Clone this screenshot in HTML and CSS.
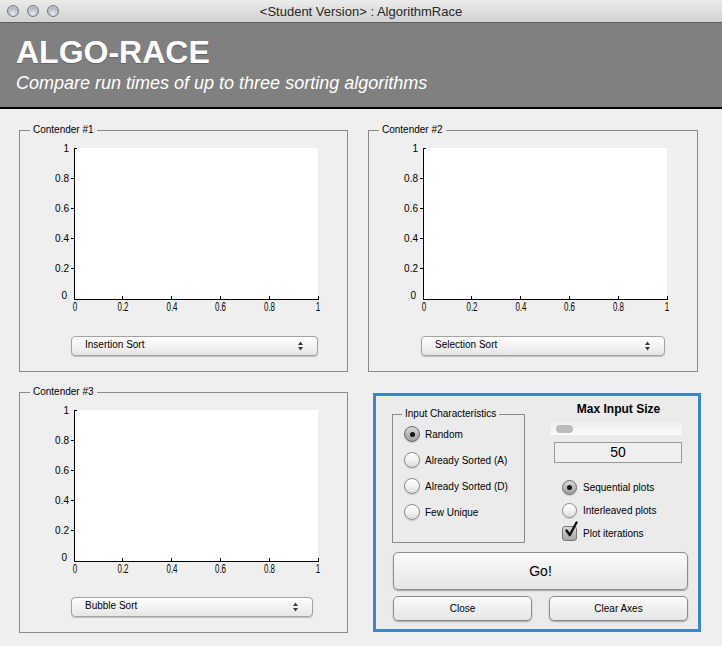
FILE: index.html
```html
<!DOCTYPE html>
<html lang="en">
<head>
<meta charset="utf-8">
<title>AlgorithmRace</title>
<link rel="stylesheet" href="styles.css">
</head>
<body>
<div class="window">
  <div class="titlebar">
    <div class="lights"><span class="light"></span><span class="light"></span><span class="light"></span></div>
    <div class="wintitle">&lt;Student Version&gt; : AlgorithmRace</div>
    <div></div>
  </div>
  <header class="banner">
    <h1>ALGO-RACE</h1>
    <p>Compare run times of up to three sorting algorithms</p>
  </header>
  <main class="grid">
    <section class="panel">
      <div class="panel-title">Contender #1</div>
      <svg class="axes" width="290" height="178" viewBox="0 0 290 178" aria-hidden="true">
        <rect x="31" y="12" width="243" height="151" fill="#fff"/>
        <g stroke="#000" fill="none" shape-rendering="crispEdges">
          <path d="M30.5 12V163.5H274.5"/>
          <path d="M30 12.5H33M27 42.5H30M27 72.5H30M27 102.5H30M27 132.5H30M78.5 163V160M127.5 163V160M176.5 163V160M225.5 163V160M274.5 163V160"/>
        </g>
        <g class="yt">
          <text x="25" y="16">1</text><text x="25" y="46">0.8</text><text x="25" y="76">0.6</text><text x="25" y="106">0.4</text><text x="25" y="136">0.2</text><text x="23" y="163">0</text>
        </g>
        <g class="xt">
          <text x="31" y="174.5" textLength="4.5" lengthAdjust="spacingAndGlyphs">0</text><text x="79" y="174.5" textLength="11" lengthAdjust="spacingAndGlyphs">0.2</text><text x="128" y="174.5" textLength="11" lengthAdjust="spacingAndGlyphs">0.4</text><text x="176.5" y="174.5" textLength="11" lengthAdjust="spacingAndGlyphs">0.6</text><text x="225.5" y="174.5" textLength="11" lengthAdjust="spacingAndGlyphs">0.8</text><text x="274" y="174.5" textLength="4.5" lengthAdjust="spacingAndGlyphs">1</text>
        </g>
      </svg>
      <div class="popup"><span>Insertion Sort</span><svg class="updown" width="5" height="10" viewBox="0 0 5 10"><path d="M2.5 0.5L5 4H0Z M2.5 9.5L5 6H0Z" fill="#3a3a3a"/></svg></div>
    </section>

    <section class="panel">
      <div class="panel-title">Contender #2</div>
      <svg class="axes" width="290" height="178" viewBox="0 0 290 178" aria-hidden="true">
        <rect x="31" y="12" width="243" height="151" fill="#fff"/>
        <g stroke="#000" fill="none" shape-rendering="crispEdges">
          <path d="M30.5 12V163.5H274.5"/>
          <path d="M30 12.5H33M27 42.5H30M27 72.5H30M27 102.5H30M27 132.5H30M78.5 163V160M127.5 163V160M176.5 163V160M225.5 163V160M274.5 163V160"/>
        </g>
        <g class="yt">
          <text x="25" y="16">1</text><text x="25" y="46">0.8</text><text x="25" y="76">0.6</text><text x="25" y="106">0.4</text><text x="25" y="136">0.2</text><text x="23" y="163">0</text>
        </g>
        <g class="xt">
          <text x="31" y="174.5" textLength="4.5" lengthAdjust="spacingAndGlyphs">0</text><text x="79" y="174.5" textLength="11" lengthAdjust="spacingAndGlyphs">0.2</text><text x="128" y="174.5" textLength="11" lengthAdjust="spacingAndGlyphs">0.4</text><text x="176.5" y="174.5" textLength="11" lengthAdjust="spacingAndGlyphs">0.6</text><text x="225.5" y="174.5" textLength="11" lengthAdjust="spacingAndGlyphs">0.8</text><text x="274" y="174.5" textLength="4.5" lengthAdjust="spacingAndGlyphs">1</text>
        </g>
      </svg>
      <div class="popup popup-right"><span>Selection Sort</span><svg class="updown" width="5" height="10" viewBox="0 0 5 10"><path d="M2.5 0.5L5 4H0Z M2.5 9.5L5 6H0Z" fill="#3a3a3a"/></svg></div>
    </section>

    <section class="panel">
      <div class="panel-title">Contender #3</div>
      <svg class="axes" width="290" height="178" viewBox="0 0 290 178" aria-hidden="true">
        <rect x="31" y="12" width="243" height="151" fill="#fff"/>
        <g stroke="#000" fill="none" shape-rendering="crispEdges">
          <path d="M30.5 12V163.5H274.5"/>
          <path d="M30 12.5H33M27 42.5H30M27 72.5H30M27 102.5H30M27 132.5H30M78.5 163V160M127.5 163V160M176.5 163V160M225.5 163V160M274.5 163V160"/>
        </g>
        <g class="yt">
          <text x="25" y="16">1</text><text x="25" y="46">0.8</text><text x="25" y="76">0.6</text><text x="25" y="106">0.4</text><text x="25" y="136">0.2</text><text x="23" y="163">0</text>
        </g>
        <g class="xt">
          <text x="31" y="174.5" textLength="4.5" lengthAdjust="spacingAndGlyphs">0</text><text x="79" y="174.5" textLength="11" lengthAdjust="spacingAndGlyphs">0.2</text><text x="128" y="174.5" textLength="11" lengthAdjust="spacingAndGlyphs">0.4</text><text x="176.5" y="174.5" textLength="11" lengthAdjust="spacingAndGlyphs">0.6</text><text x="225.5" y="174.5" textLength="11" lengthAdjust="spacingAndGlyphs">0.8</text><text x="274" y="174.5" textLength="4.5" lengthAdjust="spacingAndGlyphs">1</text>
        </g>
      </svg>
      <div class="popup popup-narrow"><span>Bubble Sort</span><svg class="updown" width="5" height="10" viewBox="0 0 5 10"><path d="M2.5 0.5L5 4H0Z M2.5 9.5L5 6H0Z" fill="#3a3a3a"/></svg></div>
    </section>

    <section class="control">
      <div class="control-top">
        <div class="group">
          <div class="group-title">Input Characteristics</div>
          <div class="opt"><span class="radio on"></span>Random</div>
          <div class="opt"><span class="radio"></span>Already Sorted (A)</div>
          <div class="opt"><span class="radio"></span>Already Sorted (D)</div>
          <div class="opt"><span class="radio"></span>Few Unique</div>
        </div>
        <div class="sizecol">
          <div class="size-title">Max Input Size</div>
          <div class="slider"><span class="thumb"></span></div>
          <div class="edit">50</div>
          <div class="opt2"><span class="radio sm on"></span>Sequential plots</div>
          <div class="opt2"><span class="radio sm"></span>Interleaved plots</div>
          <div class="opt2"><span class="check"><svg width="16" height="18" viewBox="0 0 16 18"><path d="M3.5 9.5L6.8 14L13.5 1.5" fill="none" stroke="#111" stroke-width="2.4" stroke-linecap="round" stroke-linejoin="round"/></svg></span>Plot iterations</div>
        </div>
      </div>
      <button class="btn btn-go">Go!</button>
      <div class="btn-row"><button class="btn btn-sm">Close</button><button class="btn btn-sm">Clear Axes</button></div>
    </section>
  </main>
</div>
</body>
</html>
```

FILE: styles.css
```css
* { box-sizing: border-box; margin: 0; padding: 0; }
html, body { width: 722px; height: 646px; overflow: hidden; background: #efefef; }
body { font-family: "Liberation Sans", Arial, sans-serif; color: #000; }

.titlebar {
  height: 23px;
  display: grid;
  grid-template-columns: 1fr auto 1fr;
  align-items: center;
  background: linear-gradient(#ebebeb, #d2d2d2);
  border-bottom: 1px solid #5c5c5c;
}
.lights { display: flex; gap: 8px; padding-left: 7px; }
.light {
  width: 12px; height: 12px; border-radius: 50%;
  border: 1px solid #737880;
  background: radial-gradient(circle at 50% 75%, #e9ecf0 0, #b8bdc4 55%, #8f949b 100%);
  box-shadow: inset 0 1px 1px rgba(255,255,255,.5);
}
.wintitle { font-size: 13px; color: #262626; }

.banner {
  height: 86px;
  background: #808080;
  border-bottom: 2px solid #000;
  padding: 13px 16px 0;
  color: #fff;
}
.banner h1 { font-size: 32px; line-height: 32px; font-weight: bold; text-shadow: 0 1px 1px rgba(0,0,0,.25); }
.banner p { font-size: 18px; line-height: 20px; font-style: italic; margin-top: 5px; }

.grid {
  display: grid;
  grid-template-columns: 329px 330px;
  grid-template-rows: 242px 241px;
  column-gap: 20px;
  row-gap: 20px;
  padding: 21px 0 0 19px;
}

.panel { border: 1px solid #8a8a8a; }
.panel-title {
  width: max-content;
  margin: -7px 0 0 10px;
  padding: 0 3px;
  background: #efefef;
  font-size: 10px;
  line-height: 12px;
}
.axes { display: block; margin-left: 24px; overflow: visible; }
.axes text { font-family: "Liberation Sans", Arial, sans-serif; fill: #000; }
.yt text { font-size: 10px; text-anchor: end; }
.xt text { font-size: 12px; text-anchor: middle; }

.popup {
  display: flex;
  align-items: center;
  justify-content: space-between;
  width: 247px;
  height: 20px;
  margin: 22px 0 0 51px;
  padding: 0 14px 0 13px;
  border: 1px solid #a3a3a3;
  border-radius: 4px;
  background: linear-gradient(#fefefe, #f3f3f3 50%, #e5e5e5);
  box-shadow: 0 1px 1px rgba(0,0,0,.2);
  font-size: 10px;
  line-height: 12px;
}
.popup span { margin-top: -2px; }
.popup-right { width: 244px; margin-left: 52px; }
.popup-narrow { width: 242px; margin-top: 21px; }
.updown { display: block; }

.control {
  margin: 1px 0 0 5px;
  width: 328px;
  height: 239px;
  border: 3px solid #3b86c8;
  background: #ebebeb;
  padding: 0 10px 0 17px;
}
.control-top {
  display: grid;
  grid-template-columns: 132px 137px;
  column-gap: 25px;
  align-items: start;
}
.group {
  width: 133px;
  margin: 18px 0 0 -1px;
  border: 1px solid #8a8a8a;
  padding-bottom: 17px;
}
.group-title {
  width: max-content;
  margin: -7px 0 0 9px;
  padding: 0 3px;
  background: #ebebeb;
  font-size: 10px;
  line-height: 12px;
}
.opt {
  display: flex;
  align-items: center;
  gap: 5px;
  height: 26px;
  margin-left: 11px;
  font-size: 10px;
}
.group-title + .opt { margin-top: 1px; }

.radio {
  flex: none;
  display: grid;
  place-items: center;
  width: 16px;
  height: 16px;
  border-radius: 50%;
  border: 1px solid #8c8c8c;
  background: linear-gradient(#ffffff, #f2f2f2 50%, #dcdcdc);
  box-shadow: 0 1px 1px rgba(0,0,0,.15);
}
.radio.sm { width: 15px; height: 15px; }
.radio.on {
  border-color: #6a6a6a;
  background: linear-gradient(#dadada, #b9b9b9 50%, #a0a0a0);
}
.radio.on::after {
  content: "";
  width: 5px; height: 5px; border-radius: 50%;
  background: #151515;
}

.sizecol { margin-top: 6px; }
.size-title { font-size: 12px; line-height: 14px; font-weight: bold; text-align: center; }
.slider {
  position: relative;
  width: 131px;
  height: 12px;
  margin: 7px 0 0 1px;
  background: linear-gradient(#f0f0f0, #fbfbfb);
}
.thumb {
  position: absolute;
  left: 5px; top: 2px;
  width: 17px; height: 8px;
  border-radius: 4px;
  background: #bcbcbc;
}
.edit {
  width: 128px;
  height: 21px;
  margin: 7px 0 0 4px;
  border: 1px solid #9a9a9a;
  background: #efefef;
  font-size: 14px;
  line-height: 19px;
  text-align: center;
}
.opt2 {
  display: flex;
  align-items: center;
  gap: 6px;
  height: 23px;
  margin-left: 12px;
  font-size: 10px;
}
.edit + .opt2 { margin-top: 13px; }
.check {
  position: relative;
  flex: none;
  width: 15px;
  height: 15px;
  border: 1px solid #777;
  border-radius: 3px;
  background: linear-gradient(#dadada, #bdbdbd 50%, #a6a6a6);
}
.check svg { position: absolute; left: 0; top: -6px; }

.btn {
  display: block;
  font-family: "Liberation Sans", Arial, sans-serif;
  color: #000;
  border: 1px solid #8c8c8c;
  border-radius: 5px;
  background: linear-gradient(#fbfbfb, #f0f0f0 50%, #e6e6e6);
  box-shadow: 0 1px 1.5px rgba(0,0,0,.3);
}
.btn-go { width: 295px; height: 38px; margin-top: 7px; font-size: 14px; }
.btn-row { display: flex; justify-content: space-between; margin-top: 6px; }
.btn-sm { width: 139px; height: 25px; font-size: 10px; }
```
